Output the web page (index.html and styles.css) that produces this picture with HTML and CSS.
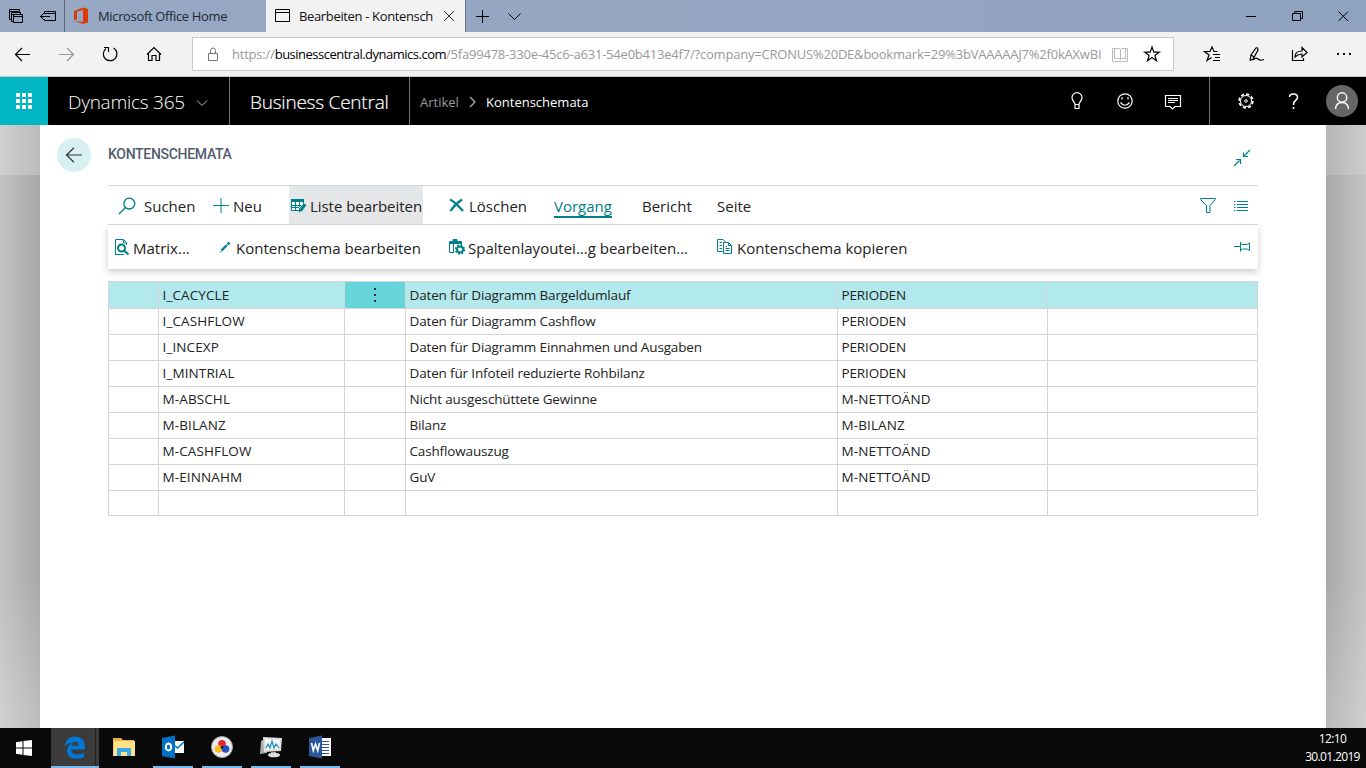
FILE: index.html
```html
<!DOCTYPE html>
<html lang="de">
<head>
<meta charset="utf-8">
<title>Bearbeiten - Kontenschemata</title>
<link rel="stylesheet" href="styles.css">
</head>
<body>
<div class="screen">
  <div class="tabs">
    <div class="tab-tools">
      <svg width="64" height="32" fill="none" stroke="#000"><path d="M11.500 19.500H9.500V9.500H19.500V11.500M9.500 11.500H19.500M14 21.500H11.500V12.500H20.500V14M12 14.500H20M13.500 14.500H22.500V22.500H13.500ZM13.500 16.500H22.500"/><path d="M44.500 14V11.500H55.500V20.500H44.500V19M44.500 13.500H55.500M50 16.500H40.500M44 13L40.500 16.500L44 20"/></svg>
    </div>
    <div class="tab">
      <svg class="tab-icon" width="16" height="18"><path fill="#dc3c0c" d="M1 4L10 .500L15 2V15.500L10 17L1 14L10 15V3L4 4.500V12L1 13.500Z"/></svg>
      <span class="tab-title">Microsoft Office Home</span>
    </div>
    <div class="tab active">
      <svg class="tab-icon" width="17" height="16" fill="none" stroke="#000"><path d="M1.500 1.500H15.500V13.500H1.500ZM1.500 4.500H15.500"/></svg>
      <span class="tab-title">Bearbeiten - Kontensch</span>
      <svg class="tab-close" width="12" height="12" stroke="#333"><path d="M1 1L11 11M11 1L1 11"/></svg>
    </div>
    <svg class="tab-new" width="64" height="32" fill="none" stroke="#000"><path d="M16.500 10V23M10 16.500H23M42.500 13.500L48.500 19.500L54.500 13.500"/></svg>
    <svg class="window-buttons" width="138" height="32" fill="none" stroke="#000"><path d="M18 16.500H28M64.500 13.500H72.500V20.500H64.500ZM66.500 13V11.500H74.500V18.500H73M110.500 11.500L120 21M120 11.500L110.500 21"/></svg>
  </div>

  <div class="browser-bar">
    <svg class="nav" width="192" height="44" fill="none" stroke="#000" stroke-width="1.200"><path d="M15.500 22.500H30M22 16L15.500 22.500L22 29"/><path stroke="#999" d="M59 22.500H73.500M67 16L73.500 22.500L67 29"/><path d="M106 16.500A6.800 6.800 0 1 0 113.500 16M104 15.500H108.500V20"/><path d="M147 22.500L154 15.500L161 22.500M148.500 21V28.500H152V23.500H156V28.500H159.500V21"/></svg>
    <div class="address">
      <svg width="39" height="32" fill="none" stroke="#777"><path d="M15.500 15.500H24.500V22.500H15.500ZM17.500 15V12.500A2.500 2.500 0 0 1 22.500 12.500V15"/></svg>
      <span class="url">https://<b>businesscentral.dynamics.com</b>/5fa99478-330e-45c6-a631-54e0b413e4f7/?company=CRONUS%20DE&amp;bookmark=29%3bVAAAAAJ7%2f0kAXwBI</span>
      <svg width="71" height="32" fill="none"><path stroke="#ddd" d="M13.500 20.500H18.500M20.500 20.500H25.500"/><path stroke="#bbb" d="M10.500 10.500H17.500L18.500 11.500L19.500 10.500H25.500V23.500H10.500ZM18.500 11.500V22M12.500 10V20.500H17.500M23.500 10V20.500H19.500"/><path stroke="#000" stroke-width="1.200" d="M50 9L51.800 14.200H57.300L52.900 17.500L54.500 22.700L50 19.600L45.500 22.700L47.100 17.500L42.700 14.200H48.200Z"/></svg>
    </div>
    <svg width="192" height="44" fill="none" stroke="#000" stroke-width="1.200"><path d="M43.500 19.500H40L38 15L36 19.500H30.500L35 23L33 28.500L37.500 25.500M39 22.500H46M41 25.500H46M39 28.500H46"/><path d="M76 28.500L77 23L82 16Q84 15 84 18L79 27L76 28.500M77 23L80 25M79 28Q82 25 84 27T90 27.500"/><path d="M119 18.500H118.500V28.500H129.500V26M121 25Q121 19 128 19V15.500L133 20.500L128 25V22Q124 22 121 25Z"/><path d="M163 22H165M169 22H171M175 22H177" stroke-width="2"/></svg>
  </div>

  <div class="suite">
    <div class="launcher"><svg width="16" height="16" fill="#fff"><path d="M0 0h4v4H0zM6 0h4v4H6zM12 0h4v4h-4zM0 6h4v4H0zM6 6h4v4H6zM12 6h4v4h-4zM0 12h4v4H0zM6 12h4v4H6zM12 12h4v4h-4z"/></svg></div>
    <div class="brand"><span>Dynamics 365</span><svg width="12" height="8" fill="none" stroke="#bbb"><path d="M1 1.500L6 6.500L11 1.500"/></svg></div>
    <div class="product"><span>Business Central</span></div>
    <div class="crumbs"><span class="crumb">Artikel</span><svg width="8" height="12" fill="none" stroke="#aaa" stroke-width="1.300"><path d="M1 1L6 6L1 11"/></svg><span>Kontenschemata</span></div>
    <div class="suite-actions">
      <svg width="149" height="48" fill="none" stroke="#fff" stroke-width="1.200"><path d="M15 27.500C15 25 12 24 12 20.500A5 4.800 0 0 1 22 20.500C22 24 19 25 19 27.500ZM15 27.500V31.500H19V27.500"/><circle cx="65" cy="24" r="7.200"/><path d="M60.500 25.500Q65 31 69.500 25.500M62 20V22.500M68 20V22.500"/><path d="M105.500 18.500H120.500V29.500H115L112.500 32L110 29.500H105.500ZM108 21.500H118M108 23.500H118M108 25.500H115"/></svg>
    </div>
    <div class="suite-account">
      <svg width="110" height="48" fill="none" stroke="#fff" stroke-width="1.300"><circle cx="36" cy="24" r="6.800" stroke-width="1.800" stroke-dasharray="3.200 2.140"/><circle cx="36" cy="24" r="5.500" stroke-width="1"/><circle cx="36" cy="24" r="1.300" stroke-width="1"/><path stroke-width="1.600" d="M79.500 20Q79.500 17 83.500 17T87.500 20.500Q87.500 22 85.500 23.500T83.500 28M83.500 30V32"/></svg>
      <svg width="32" height="32" fill="none" stroke="#fff" stroke-width="1.400"><circle cx="16" cy="16" r="16" fill="#666" stroke="none"/><circle cx="16" cy="12.500" r="4.700"/><path d="M9.500 24Q10 17.500 16 17.500T22.500 24"/></svg>
    </div>
  </div>

  <div class="workspace">
    <div class="edge left"></div>
    <div class="page">
      <div class="page-head">
        <div class="back"><svg width="18" height="16" fill="none" stroke="#333" stroke-width="1.200"><path d="M1.500 8H17M9 .800L1.500 8L9 15.200"/></svg></div>
        <h1>KONTENSCHEMATA</h1>
        <svg class="collapse" width="18" height="18" fill="none" stroke="#00808a" stroke-width="1.200"><path d="M1 17L6.500 11.500M3 10.500H7.500V15M17 1L10.500 7.500M10.500 3.500V7.500H15"/></svg>
      </div>
      <div class="ribbon">
        <div class="cmd w1"><svg width="18" height="18" class="ic"><path stroke-width="1.300" d="M1 17L7 11M11.300 1.200A5.400 5.400 0 1 0 11.310 1.200Z"/></svg><span>Suchen</span></div>
        <div class="cmd w2"><svg width="16" height="18" class="ic"><path d="M0 8.500H16M8 1V16"/></svg><span>Neu</span></div>
        <div class="cmd w3"><svg width="16" height="16" class="ic"><path fill="#00808a" stroke="none" d="M0 1H13V4H0Z"/><path fill="#fff" d="M.500 4V12.500H8.500V10.500L12.500 6V4M.500 7.500H10M.500 9.500H8M4.500 4V12.500M8.500 4V9"/><path fill="#00808a" stroke="none" d="M8 14.500L8.700 11.500L13 5.500L15.500 7L11.300 12.800Z"/></svg><span>Liste bearbeiten</span></div>
        <div class="cmd w4"><svg width="16" height="16" class="ic"><path stroke-width="2.200" d="M1 1.500Q6 4 14 13M13 1.500Q6 6 1.500 13"/></svg><span>Löschen</span></div>
        <div class="cmd w5 current"><span>Vorgang</span></div>
        <div class="cmd w6"><span>Bericht</span></div>
        <div class="cmd w7"><span>Seite</span></div>
        <svg class="view-tools ic" width="58" height="38"><path d="M.500 12.500H15.500V13.500L10 19.500V26.500H6.500V19.500L.500 13.500Z"/><path d="M34 15.500H35.500M34 18.500H35.500M34 21.500H35.500M34 24.500H35.500M37 15.500H48M37 18.500H48M37 21.500H48M37 24.500H48"/></svg>
      </div>
      <div class="subribbon">
        <div class="cmd s1"><svg width="16" height="18" class="ic"><path d="M3 16.500H1.500V1.500H9.500L12.500 4.500V7M9.500 2V5H12M1.500 16.500H10"/><circle cx="7.500" cy="10" r="3.500" stroke-width="2"/><path stroke-width="2.200" d="M10 12.500L14.500 16.500"/></svg><span>Matrix...</span></div>
        <div class="cmd s2"><svg width="12" height="14" class="ic"><path stroke-width="2.400" d="M2.500 10.500L8 5"/><path stroke-width="2.600" d="M8.700 4.300L10.500 2.500"/><path d="M1 12.500L2.500 11"/></svg><span>Kontenschema bearbeiten</span></div>
        <div class="cmd s3"><svg width="18" height="18" class="ic"><path fill="#00808a" d="M.500 3.500H4V1.500H8V3.500H12.500V5.500H.500Z"/><path d="M.500 4V14.500H5M4.500 5V14.500M12.500 5V7"/><circle cx="11" cy="11.500" r="3" stroke-width="2"/><circle cx="11" cy="11.500" r="4.400" stroke-width="1.600" stroke-dasharray="1.800 1.650"/></svg><span>Spaltenlayoutei...g bearbeiten...</span></div>
        <div class="cmd s4"><svg width="16" height="16" class="ic"><path d="M5.500 12.500H.500V.500H6L8.500 3M2.500 3.500H5M2.500 6.500H5M2.500 9.500H5M6.500 3.500H11.500L14.500 6.500V14.500H6.500ZM11.500 4V6.500H14M8.500 7.500H10M8.500 9.500H12.500M8.500 11.500H12.500"/></svg><span>Kontenschema kopieren</span></div>
        <svg class="pin ic" width="17" height="12"><path d="M0 5.500H6M6.500 1V10.500M6.500 2.500L8.500 3.500H13L15.500 2V9.500L13 8H8.500L6.500 9"/></svg>
      </div>
      <div class="grid">
        <div class="row selected"><i></i><span class="code">I_CACYCLE</span><span class="more"><svg width="4" height="15" fill="#333"><path d="M1 0h2v2H1zM1 6h2v2H1zM1 12h2v2H1z"/></svg></span><span>Daten für Diagramm Bargeldumlauf</span><span>PERIODEN</span><i></i></div>
        <div class="row"><i></i><span class="code">I_CASHFLOW</span><i></i><span>Daten für Diagramm Cashflow</span><span>PERIODEN</span><i></i></div>
        <div class="row"><i></i><span class="code">I_INCEXP</span><i></i><span>Daten für Diagramm Einnahmen und Ausgaben</span><span>PERIODEN</span><i></i></div>
        <div class="row"><i></i><span class="code">I_MINTRIAL</span><i></i><span>Daten für Infoteil reduzierte Rohbilanz</span><span>PERIODEN</span><i></i></div>
        <div class="row"><i></i><span class="code">M-ABSCHL</span><i></i><span>Nicht ausgeschüttete Gewinne</span><span class="code">M-NETTOÄND</span><i></i></div>
        <div class="row"><i></i><span class="code">M-BILANZ</span><i></i><span>Bilanz</span><span class="code">M-BILANZ</span><i></i></div>
        <div class="row"><i></i><span class="code">M-CASHFLOW</span><i></i><span>Cashflowauszug</span><span class="code">M-NETTOÄND</span><i></i></div>
        <div class="row"><i></i><span class="code">M-EINNAHM</span><i></i><span>GuV</span><span class="code">M-NETTOÄND</span><i></i></div>
        <div class="row"><i></i><i></i><i></i><i></i><i></i><i></i></div>
      </div>
    </div>
    <div class="edge right"></div>
  </div>

  <div class="taskbar">
    <div class="start"><svg width="16" height="16" fill="#fff"><path d="M0 2.200L6.500 1.300V7.500H0zM7.500 1.100L16 0V7.500H7.500zM0 8.500H6.500V14.700L0 13.800zM7.500 8.500H16V16L7.500 14.900z"/></svg></div>
    <div class="app edge-app"><svg width="22" height="23"><path fill="#0078d7" d="M.500 10.500C1.500 4 5.500 .500 11 .500C17.500 .500 21 5 21 11V13.500H7.200C7.500 17 10 18.500 13.500 18.500C16 18.500 18 17.800 20 16.600V21C18 22.100 15.500 22.700 12.500 22.700C6.500 22.700 3 19.500 3 14.500C3 11 5 8.500 8 6.900C4.500 7 2 8.500 .500 10.500ZM7.400 9.700H14.800C14.800 7.200 13.700 5.700 11.400 5.700C9.200 5.700 7.900 7.300 7.400 9.700Z"/></svg></div>
    <div class="app idle"><svg width="22" height="20"><path fill="#e9b83c" d="M0 1H8L10 3H21V18H0Z"/><path fill="#ffe18c" d="M1 4H22V19H0Z"/><path fill="#38a8e8" d="M4 19V12Q4 11 5 11H17Q18 11 18 12V19H14V15H8V19Z"/></svg></div>
    <div class="app"><svg width="22" height="24"><path fill="#fff" d="M12 6H22V18H12Z"/><path stroke="#0072c6" stroke-width="1.500" fill="none" d="M12 10L15.500 13L22 7"/><path fill="#0072c6" d="M0 3L13 .500V23.500L0 21Z"/><ellipse cx="6.500" cy="12" rx="2.700" ry="3.500" fill="none" stroke="#fff" stroke-width="2"/></svg></div>
    <div class="app"><svg width="22" height="22"><circle cx="11" cy="11" r="10.500" fill="#ececec" stroke="#aaa"/><circle cx="11" cy="7.800" r="3.800" fill="#e52828"/><circle cx="7.500" cy="13" r="3.800" fill="#f8bb24"/><circle cx="14.500" cy="13" r="3.800" fill="#2851be"/><circle cx="11" cy="11.300" r="1.500" fill="#222"/></svg></div>
    <div class="app"><svg width="24" height="22"><path fill="#a8acad" d="M2 5L8 2V17L1 18Z"/><path fill="#ddd" d="M4 1L23 2L22 15L5 16Z"/><path fill="#f5fbfd" d="M6 3L21 4L20 13L7 14Z"/><path fill="none" stroke="#288fbc" stroke-width="1.200" d="M7 12L9 8L11 12L13 5L15 12L17 8L20 12"/><path fill="#aaa" d="M12 16H17V18H12Z"/><ellipse cx="15" cy="19" rx="6" ry="2.300" fill="#ddd"/></svg></div>
    <div class="app"><svg width="22" height="24"><path fill="#fff" d="M12 3H22V21H12Z"/><path stroke="#2b579a" d="M13 6.500H20M13 9.500H20M13 12.500H20M13 15.500H20M13 18.500H20"/><path fill="#2b579a" d="M0 3L13 .500V23.500L0 21Z"/><path fill="none" stroke="#fff" stroke-width="1.600" d="M2.500 8L4.300 15.500L6.500 9L8.700 15.500L10.500 8"/></svg></div>
    <div class="clock"><span>12:10</span><span>30.01.2019</span></div>
  </div>
</div>
</body>
</html>
```
FILE: styles.css
```css
* { box-sizing: border-box; }
body { margin: 0; font-family: "Open Sans", "Noto Sans", sans-serif; color: #222; }
svg { display: block; flex: none; }
.screen { width: 1366px; height: 768px; display: flex; flex-direction: column; overflow: hidden; white-space: nowrap; }

/* browser tabs */
.tabs { height: 32px; display: flex; background: linear-gradient(90deg, #97a8c3, #93a5c2 60%, #8fa2bf); font-size: 13px; }
.tab-tools { width: 65px; border-right: 1px solid #5c6779; }
.tab { width: 201px; display: flex; align-items: center; padding-left: 8px; color: #1d2734; }
.tab-icon { margin-right: 9px; }
.tab.active { width: 199px; background: #f2f2f2; color: #111; }
.tab.active .tab-icon { margin-right: 8px; }
.tab-title { flex: none; letter-spacing: -.35px; }
.tab-close { margin-left: auto; margin-right: 10px; }
.tab-new { border-left: 1px solid #66758c; }
.window-buttons { margin-left: auto; }

/* address bar */
.browser-bar { height: 45px; display: flex; background: #f2f2f2; border-bottom: 1px solid #c8c8c8; }
.address { width: 982px; height: 34px; margin-top: 5px; border: 1px solid #cacaca; background: #fff; display: flex; align-items: center; }
.url { width: 870px; overflow: hidden; font-size: 13px; color: #999; letter-spacing: -.21px; }
.url b { font-weight: 400; color: #000; letter-spacing: -.5px; }

/* suite header */
.suite { height: 48px; display: flex; background: #000; color: #fff; }
.launcher { width: 48px; display: grid; place-items: center; background: #00b7c3; }
.brand { width: 182px; padding-left: 20px; display: flex; align-items: center; justify-content: space-between; padding-right: 21px; border-right: 1px solid #777; font-size: 19px; font-weight: 300; letter-spacing: -.25px; }
.brand svg { margin-top: 3px; }
.product { width: 180px; padding-left: 20px; display: flex; align-items: center; border-right: 1px solid #777; font-size: 19px; font-weight: 300; letter-spacing: -.22px; -webkit-text-stroke: .2px #fff; }
.brand span, .product span { padding-top: 2px; }
.crumbs { padding-left: 10px; display: flex; align-items: center; font-size: 13px; padding-top: 2px; }
.crumbs svg { margin: 0 9px; }
.crumb { color: #999; width: 40px; }
.suite-actions { margin-left: auto; width: 150px; border-right: 1px solid #777; }
.suite-account { width: 156px; display: flex; align-items: center; }
.suite-account svg:last-child { margin-left: 6px; }

/* workspace */
.workspace { height: 603px; display: flex; background: #fff; }
.edge { width: 40px; }
.edge.left { background: linear-gradient(180deg, rgba(255,255,255,.22) 50px, transparent 50px, transparent 75%, rgba(255,255,255,.25)), linear-gradient(90deg, #c2c2c2, #a8a8a8); }
.edge.right { background: linear-gradient(180deg, rgba(255,255,255,.15) 50px, transparent 50px, transparent 75%, rgba(255,255,255,.2)), linear-gradient(90deg, #a9a9a9, #c4c4c4); }
.page { width: 1286px; padding: 0 68px; }
.page-head { height: 60px; display: flex; margin-left: -51px; padding-top: 13px; }
.back { width: 34px; height: 34px; border-radius: 50%; background: #d9f0f2; display: grid; place-items: center; }
h1 { margin: 6px 0 0 17px; font: 500 14px/20px Roboto, sans-serif; color: #505c6d; letter-spacing: -.3px; }
.collapse { margin: 11px 7px 0 auto; }
.ic { fill: none; stroke: #00808a; }
.ribbon { height: 40px; display: flex; border-top: 1px solid #d3d5d7; border-bottom: 1px solid #d3d5d7; font-size: 15px; }
.cmd { display: flex; align-items: center; }
.cmd span { padding-top: 1px; }
.ribbon .cmd svg { margin-top: 2px; }
.w1 { width: 105px; padding-left: 10px; gap: 8px; }
.w2 { width: 76px; gap: 4px; }
.w3 { width: 134px; padding-left: 2px; gap: 3px; background: #e5e6e8; letter-spacing: -.05px; }
.w4 { width: 131px; padding-left: 26px; gap: 4px; }
.w5 { width: 88px; }
.w6 { width: 75px; }
.current span { color: #00808a; line-height: 19px; margin-top: 5px; border-bottom: 2px solid #00808a; padding-top: 0; }
.view-tools { margin-left: auto; }
.subribbon { height: 44px; display: flex; align-items: center; background: #fff; box-shadow: 0 3px 7px rgba(0,0,0,.2); font-size: 15px; clip-path: inset(0 -8px -10px -8px); }
.s1 { width: 111px; padding-left: 6px; gap: 3px; }
.s2 { width: 230px; gap: 5px; }
.s3 { width: 268px; gap: 1px; }
.s4 { gap: 4px; }
.pin { margin-left: auto; margin-right: 7px; }

/* list */
.grid { margin-top: 12px; border-top: 1px solid #d3d5d7; border-left: 1px solid #d3d5d7; font-size: 13.5px; }
.row { height: 26px; display: grid; grid-template-columns: 50px 186px 61px 432px 210px 1fr; }
.row > * { border-right: 1px solid #d3d5d7; border-bottom: 1px solid #d3d5d7; padding-left: 3.5px; line-height: 26px; letter-spacing: -.15px; }
.row > .code { letter-spacing: .12px; }
.selected { background: #b2e9ec; }
.row > .more { display: grid; place-items: center; padding: 0; background: #66d4db; }

/* taskbar */
.taskbar { height: 40px; display: flex; background: #090909; color: #fff; }
.start { width: 48px; display: grid; place-items: center; }
.app { width: 40px; margin-right: 9px; display: grid; place-items: center; border-bottom: 2px solid #76b9ed; }
.edge-app { width: 48px; margin: 0 5px 0 3px; background: linear-gradient(90deg, #3b3b3b 44px, #222 44px, #222 45px, #3b3b3b 45px); }
.idle { border-color: transparent; }
.clock { margin-left: auto; width: 67px; display: flex; flex-direction: column; align-items: center; font-size: 12px; line-height: 18px; padding: 2px 0; letter-spacing: -.65px; }
```
